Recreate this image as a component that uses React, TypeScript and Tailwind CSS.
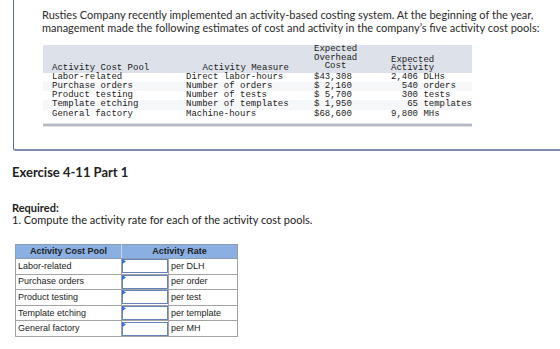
import React from 'react';

const costPools = [
  { pool: 'Labor-related', measure: 'Direct labor-hours', cost: '$43,308', activity: '2,406 DLHs' },
  { pool: 'Purchase orders', measure: 'Number of orders', cost: '$ 2,160', activity: '  540 orders' },
  { pool: 'Product testing', measure: 'Number of tests', cost: '$ 5,700', activity: '  300 tests' },
  { pool: 'Template etching', measure: 'Number of templates', cost: '$ 1,950', activity: '   65 templates' },
  { pool: 'General factory', measure: 'Machine-hours', cost: '$68,600', activity: '9,800 MHs' },
];

const rateRows = [
  { pool: 'Labor-related', unit: 'per DLH' },
  { pool: 'Purchase orders', unit: 'per order' },
  { pool: 'Product testing', unit: 'per test' },
  { pool: 'Template etching', unit: 'per template' },
  { pool: 'General factory', unit: 'per MH' },
];

const AnswerInput: React.FC = () => (
  <div className="relative h-[14px] w-full border border-[#6483bd] bg-white">
    <svg className="absolute -left-px -top-px" width="4" height="5" viewBox="0 0 4 5">
      <path d="M0 0 L4 2.5 L0 5 Z" fill="#2f6fd6" />
    </svg>
  </div>
);

export default function App() {
  return (
    <div className="h-[349px] w-[560px] overflow-hidden bg-white text-[#333] font-['Lato','Open_Sans',sans-serif]">
      {/* problem statement box */}
      <div className="ml-[13px] h-[151px] rounded-bl-[3px] border-b-2 border-l border-[#7f8db2] border-l-[#5b6b98] pl-[28px] pt-[9px]">
        <p className="whitespace-nowrap text-[11px] leading-[12.5px] text-[#2b2b2b]">
          Rusties Company recently implemented an activity-based costing system. At the beginning of the year,
          <br />
          management made the following estimates of cost and activity in the company’s five activity cost pools:
        </p>

        <div className="ml-px mt-[11px] w-[429px] font-['Liberation_Mono',monospace] text-[9px] text-[#1a1a1a]">
          <div className="grid h-[27.5px] grid-cols-[134px_128px_77px_1fr] items-end bg-[#dde1e9] pl-[9px] leading-[8.5px] whitespace-pre">
            <div>Activity Cost Pool</div>
            <div className="pr-[25px] text-right">Activity Measure</div>
            <div className="mb-[2px] w-[43px] text-center">
              Expected
              <br />
              Overhead
              <br />
              Cost
            </div>
            <div className="w-[43px] text-center">
              Expected
              <br />
              Activity
            </div>
          </div>
          {costPools.map((row, i) => (
            <div
              key={row.pool}
              className={`grid grid-cols-[134px_128px_77px_1fr] pl-[9px] leading-[9.25px] whitespace-pre ${
                i % 2 === 1 ? 'bg-[#f6f7f9]' : 'bg-white'
              }`}
            >
              <div>{row.pool}</div>
              <div>{row.measure}</div>
              <div>{row.cost}</div>
              <div>{row.activity}</div>
            </div>
          ))}
          <div className="mt-[4px] h-[4px] border-y border-[#e1e3e8] bg-[#b4b9c3]" />
        </div>
      </div>

      <h2 className="ml-[12px] mt-[13px] text-[13px] font-bold leading-[17px] text-[#222]">Exercise 4-11 Part 1</h2>

      <div className="ml-[12px] mt-[21px] text-[11px] leading-[12px] text-[#222]">
        <div className="font-bold">Required:</div>
        <div>1. Compute the activity rate for each of the activity cost pools.</div>
      </div>

      {/* answer table */}
      <table className="ml-[15px] mt-[18px] border-collapse font-['Liberation_Sans',Arial,sans-serif] text-[9px] text-[#222]">
        <thead>
          <tr className="h-[14px] bg-[#8aafe2]">
            <th className="w-[106px] border border-[#8d9cb5] border-r-[#c6d6ef] p-0 font-bold leading-[13px]">
              Activity Cost Pool
            </th>
            <th colSpan={2} className="border border-[#8d9cb5] p-0 font-bold leading-[13px]">
              Activity Rate
            </th>
          </tr>
        </thead>
        <tbody>
          {rateRows.map((row) => (
            <tr key={row.pool} className="h-[15.6px]">
              <td className="border border-[#a3a3a3] pl-[2px] leading-[13px]">{row.pool}</td>
              <td className="w-[47px] border border-[#a3a3a3] p-0">
                <AnswerInput />
              </td>
              <td className="w-[69px] border border-[#a3a3a3] pl-[2px] leading-[13px]">{row.unit}</td>
            </tr>
          ))}
        </tbody>
      </table>
    </div>
  );
}
